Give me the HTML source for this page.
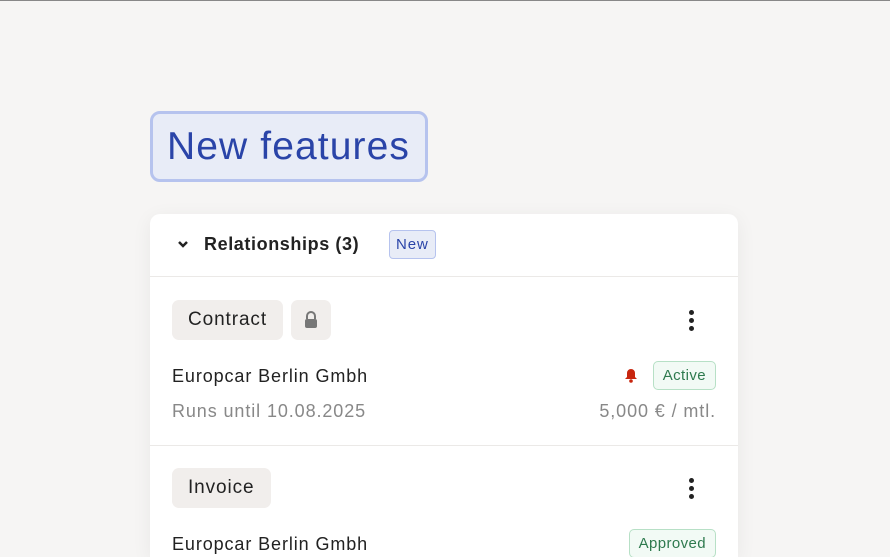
<!DOCTYPE html>
<html style="overflow:hidden"><head><style>
*{margin:0;padding:0;box-sizing:border-box}
html,body{overflow:hidden}
body{width:890px;height:557px;background:#f6f5f4;font-family:"Liberation Sans",sans-serif;position:relative;border-top:1px solid #888}
.abs{position:absolute}
.title{left:150px;top:110px;width:278px;height:71px;background:#e8ecf7;border:3px solid #b6c3ee;border-radius:10px;color:#2a44a8;font-size:39px;line-height:65px;padding-left:14px;letter-spacing:1.1px}
.card{left:150px;top:213px;width:588px;height:344px;background:#fff;border-radius:10px 10px 0 0;box-shadow:0 4px 20px rgba(0,0,0,0.06)}
.hr{left:0;width:588px;height:1px;background:#ebe9e7}
.chip{background:#f1eeec;border-radius:7px;font-size:19px;color:#222;height:40px;line-height:40px;padding:0 16px;letter-spacing:0.9px}
.t{font-size:18px;color:#222;letter-spacing:0.9px}
.g{font-size:18px;color:#888;letter-spacing:0.9px}
.badge{border:1px solid #b7e0c6;background:#f2faf5;color:#2e7a4e;border-radius:5px;font-size:15px;height:29px;line-height:27px;padding:0 9px;letter-spacing:0.4px}
.dots span{display:block;width:5px;height:5px;border-radius:50%;background:#222;margin-bottom:3px}
</style></head><body>
<div class="abs title">New features</div>
<div class="abs card">
  <svg class="abs" style="left:27px;top:26px" width="12" height="8" viewBox="0 0 12 8"><path d="M2 2l4 4 4-4" stroke="#222" stroke-width="2.5" fill="none"/></svg>
  <div class="abs" style="left:54px;top:20px;font-size:18px;font-weight:bold;color:#222;letter-spacing:0.6px">Relationships (3)</div>
  <div class="abs" style="left:239px;top:16px;height:29px;line-height:27px;padding:0 6px;border:1px solid #b6c3ee;background:#e8ecf7;color:#2a44a8;border-radius:4px;font-size:15px;letter-spacing:0.9px">New</div>
  <div class="abs hr" style="top:62px"></div>
  <div class="abs chip" style="left:22px;top:86px">Contract</div>
  <div class="abs chip" style="left:141px;top:86px;width:40px;padding:0">
    <svg class="abs" style="left:12px;top:11px" width="16" height="18" viewBox="0 0 16 18"><path d="M4 8V5a4 4 0 018 0v3" stroke="#777" stroke-width="2" fill="none"/><rect x="2" y="8" width="12" height="9" rx="2" fill="#777"/></svg>
  </div>
  <div class="abs dots" style="left:539px;top:96px"><span></span><span></span><span></span></div>
  <div class="abs t" style="left:22px;top:152px">Europcar Berlin Gmbh</div>
  <svg class="abs" style="left:474px;top:154px" width="14" height="15" viewBox="0 0 14 15"><path d="M7 1a4 4 0 00-4 4v4l-2 2h12l-2-2V5a4 4 0 00-4-4z" fill="#c8260f"/><circle cx="7" cy="13" r="1.8" fill="#c8260f"/></svg>
  <div class="abs badge" style="right:22px;top:147px">Active</div>
  <div class="abs g" style="left:22px;top:187px">Runs until 10.08.2025</div>
  <div class="abs g" style="right:22px;top:187px">5,000 € / mtl.</div>
  <div class="abs hr" style="top:231px"></div>
  <div class="abs chip" style="left:22px;top:254px">Invoice</div>
  <div class="abs dots" style="left:539px;top:264px"><span></span><span></span><span></span></div>
  <div class="abs t" style="left:22px;top:320px">Europcar Berlin Gmbh</div>
  <div class="abs badge" style="right:22px;top:315px">Approved</div>
</div>
</body></html>
